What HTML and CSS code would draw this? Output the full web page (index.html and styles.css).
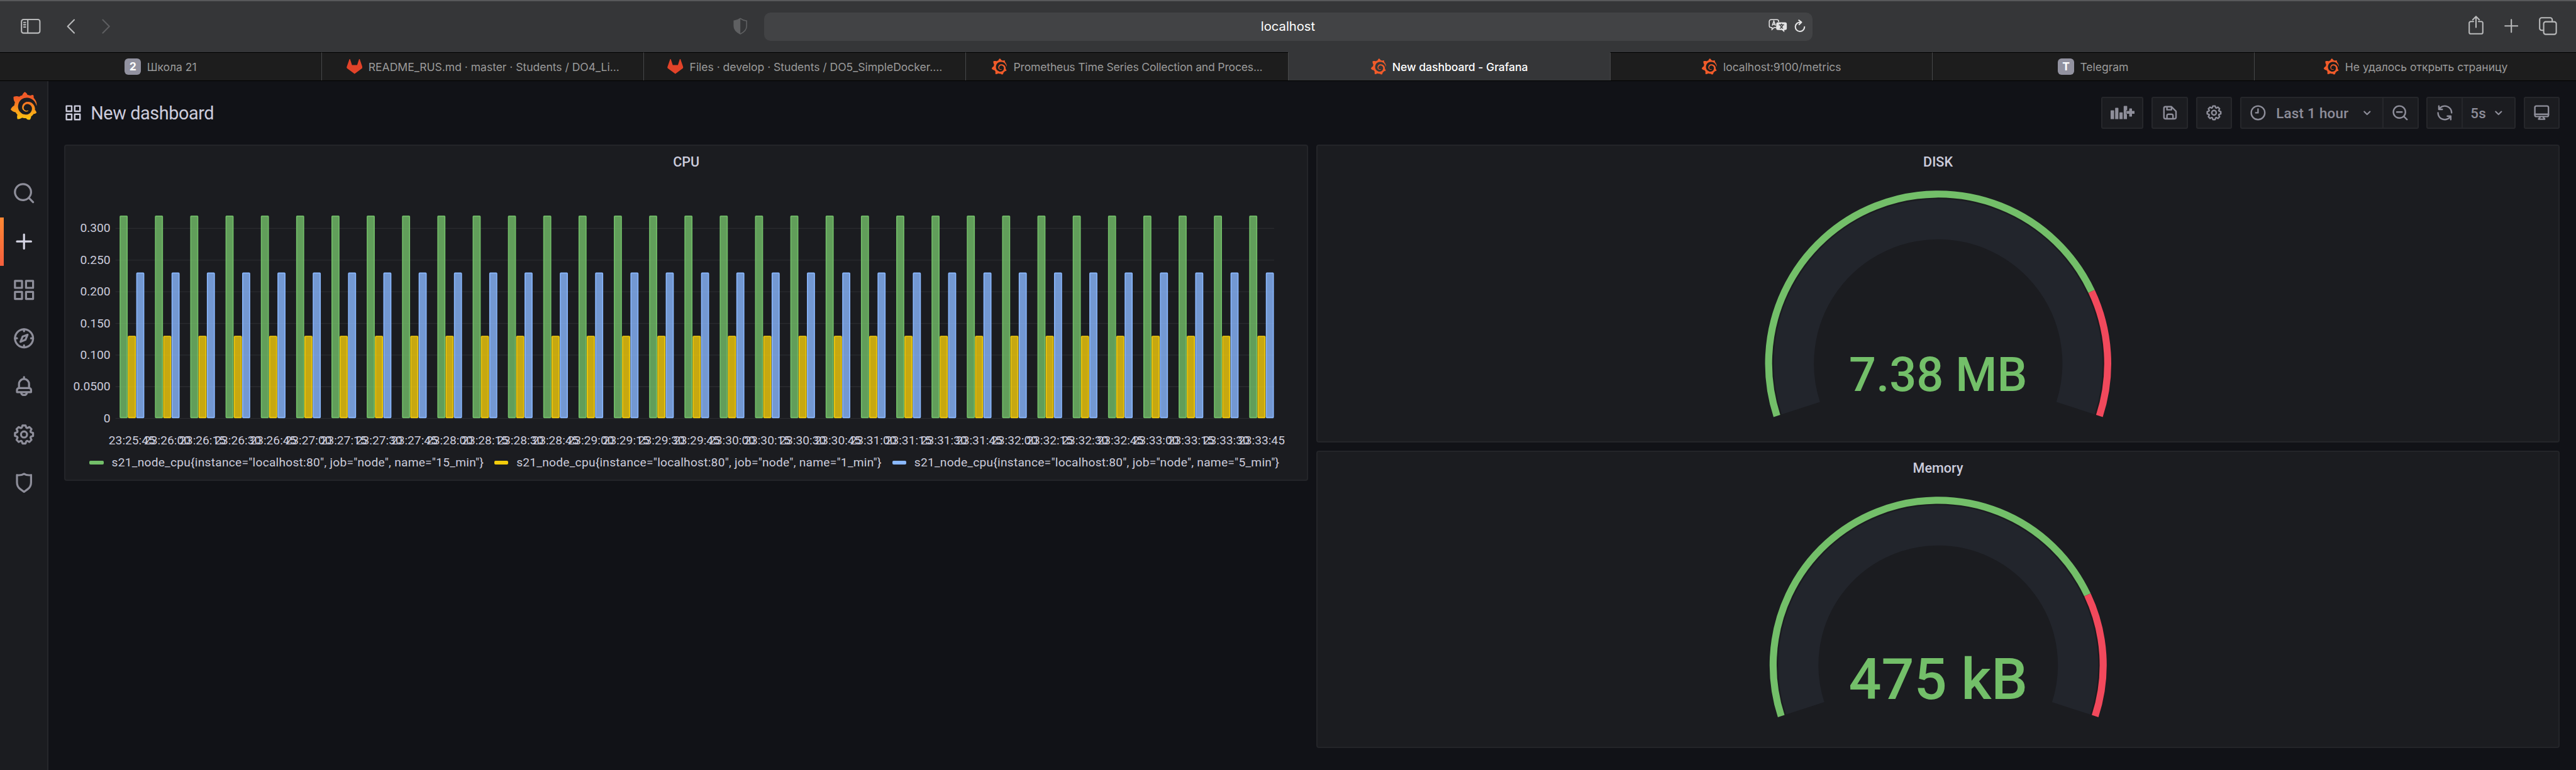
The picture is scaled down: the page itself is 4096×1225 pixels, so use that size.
FILE: index.html
```html
<!DOCTYPE html>
<html lang="ru">
<head>
<meta charset="utf-8">
<title>New dashboard - Grafana</title>
<link rel="stylesheet" href="styles.css">
</head>
<body>
<svg class="sprite" width="0" height="0">
  <defs>
    <linearGradient id="flame" x1="0" y1="1" x2="0" y2="0">
      <stop offset="0" stop-color="#fcc80f"/><stop offset=".35" stop-color="#f99b1c"/><stop offset=".8" stop-color="#f05a28"/>
    </linearGradient>
    <symbol id="grafana" viewBox="8 0 335 358">
      <path d="M342,161.2c-0.6-6.1-1.6-13.1-3.6-20.9c-2-7.7-5-16.2-9.4-25c-4.4-8.8-10.1-17.9-17.5-26.8c-2.9-3.5-6.1-6.9-9.5-10.2c5.1-20.3-6.2-37.9-6.2-37.9c-19.5-1.2-31.9,6.1-36.5,9.4c-0.8-0.3-1.5-0.7-2.3-1c-3.3-1.3-6.7-2.6-10.3-3.7c-3.5-1.1-7.1-2.1-10.8-3c-3.7-0.9-7.4-1.6-11.2-2.2c-0.7-0.1-1.3-0.2-2-0.3c-8.5-27.2-32.9-38.6-32.9-38.6c-27.3,17.3-32.4,41.5-32.4,41.5s-0.1,0.5-0.3,1.4c-1.5,0.4-3,0.9-4.5,1.3c-2.1,0.6-4.2,1.4-6.2,2.2c-2.1,0.8-4.1,1.6-6.2,2.5c-4.1,1.8-8.2,3.8-12.2,6c-3.9,2.2-7.7,4.6-11.4,7.1c-0.5-0.2-1-0.4-1-0.4c-37.8-14.4-71.3,2.9-71.3,2.9c-3.1,40.2,15.1,65.5,18.7,70.1c-0.9,2.5-1.7,5-2.5,7.5c-2.8,9.1-4.9,18.4-6.2,28.1c-0.2,1.4-0.4,2.8-0.5,4.2C18.8,192.7,8.5,228,8.5,228c29.1,33.5,63.1,35.6,63.1,35.6c0,0,0.1-0.1,0.1-0.1c4.3,7.7,9.3,15,14.9,21.9c2.4,2.9,4.8,5.6,7.4,8.3c-10.6,30.4,1.5,55.6,1.5,55.6c32.4,1.2,53.7-14.2,58.2-17.7c3.2,1.1,6.5,2.1,9.8,2.9c10,2.6,20.2,4.1,30.4,4.5c2.5,0.1,5.1,0.2,7.6,0.1l1.2,0l0.8,0l1.6,0l1.6-0.1l0,0.1c15.3,21.8,42.1,24.9,42.1,24.9c19.1-20.1,20.2-40.1,20.2-44.4l0,0c0,0,0-0.1,0-0.3c0-0.4,0-0.6,0-0.6l0,0c0-0.3,0-0.6,0-0.9c4-2.8,7.8-5.8,11.4-9.1c7.6-6.9,14.3-14.8,19.9-23.3c0.5-0.8,1-1.6,1.5-2.4c21.6,1.2,36.9-13.4,36.9-13.4c-3.6-22.5-16.4-33.5-19.1-35.6l0,0c0,0-0.1-0.1-0.3-0.2c-0.2-0.1-0.2-0.2-0.2-0.2c0,0,0,0,0,0c-0.1-0.1-0.3-0.2-0.5-0.3c0.1-1.4,0.2-2.7,0.3-4.1c0.2-2.4,0.2-4.9,0.2-7.3l0-1.8l0-0.9l0-0.5c0-0.6,0-0.4,0-0.6l-0.1-1.5l-0.1-2c0-0.7-0.1-1.3-0.2-1.9c-0.1-0.6-0.1-1.3-0.2-1.9l-0.2-1.9l-0.3-1.9c-0.4-2.5-0.8-4.9-1.4-7.4c-2.3-9.7-6.1-18.9-11-27.2c-5-8.3-11.2-15.6-18.3-21.8c-7-6.2-14.9-11.2-23.1-14.9c-8.3-3.7-16.9-6.1-25.5-7.2c-4.3-0.6-8.6-0.8-12.9-0.7l-1.6,0l-0.4,0c-0.1,0-0.6,0-0.5,0l-0.7,0l-1.6,0.1c-0.6,0-1.2,0.1-1.7,0.1c-2.2,0.2-4.4,0.5-6.5,0.9c-8.6,1.6-16.7,4.7-23.8,9c-7.1,4.3-13.3,9.6-18.3,15.6c-5,6-8.9,12.7-11.6,19.6c-2.7,6.9-4.2,14.1-4.6,21c-0.1,1.7-0.1,3.5-0.1,5.2c0,0.4,0,0.9,0,1.3l0.1,1.4c0.1,0.8,0.1,1.7,0.2,2.5c0.3,3.5,1,6.9,1.9,10.1c1.9,6.5,4.9,12.4,8.6,17.4c3.7,5,8.2,9.1,12.9,12.4c4.7,3.2,9.8,5.5,14.8,7c5,1.5,10,2.1,14.7,2.1c0.6,0,1.2,0,1.7,0c0.3,0,0.6,0,0.9,0c0.3,0,0.6,0,0.9-0.1c0.5,0,1-0.1,1.5-0.1c0.1,0,0.3,0,0.4-0.1l0.5-0.1c0.3,0,0.6-0.1,0.9-0.1c0.6-0.1,1.1-0.2,1.7-0.3c0.6-0.1,1.1-0.2,1.6-0.4c1.1-0.2,2.1-0.6,3.1-0.9c2-0.7,4-1.5,5.7-2.4c1.8-0.9,3.4-2,5-3c0.4-0.3,0.9-0.6,1.3-1c1.6-1.3,1.9-3.7,0.6-5.3c-1.1-1.4-3.1-1.8-4.7-0.9c-0.4,0.2-0.8,0.4-1.2,0.6c-1.4,0.7-2.8,1.3-4.3,1.8c-1.5,0.5-3.1,0.9-4.7,1.2c-0.8,0.1-1.6,0.2-2.5,0.3c-0.4,0-0.8,0.1-1.3,0.1c-0.4,0-0.9,0-1.2,0c-0.4,0-0.8,0-1.2,0c-0.5,0-1,0-1.5-0.1l-0.3,0l-0.3,0c-0.2,0-0.5,0-0.7-0.1c-0.5-0.1-0.9-0.1-1.4-0.2c-3.7-0.5-7.4-1.6-10.9-3.2c-3.6-1.6-7-3.8-10.1-6.6c-3.1-2.8-5.8-6.1-7.9-9.9c-2.1-3.8-3.6-8-4.3-12.4c-0.3-2.2-0.5-4.5-0.4-6.7c0-0.6,0.1-1.2,0.1-1.8l0-0.3l0-0.5c0-0.3,0.1-0.6,0.1-0.9c0.1-1.2,0.3-2.4,0.5-3.6c1.7-9.6,6.5-19,13.9-26.1c1.9-1.8,3.9-3.4,6-4.9c2.1-1.5,4.4-2.8,6.8-3.9c2.4-1.1,4.8-2,7.4-2.7c2.5-0.7,5.1-1.1,7.8-1.4c1.3-0.1,2.6-0.2,4-0.2c0.4,0,0.6,0,0.9,0l1.1,0l0.7,0l0.4,0l1.1,0.1c2.9,0.2,5.7,0.6,8.5,1.3c5.6,1.2,11.1,3.3,16.2,6.1c10.2,5.7,18.9,14.5,24.2,25.1c2.7,5.3,4.6,11,5.5,16.9c0.2,1.5,0.4,3,0.5,4.5l0.1,1.1l0.1,1.1c0,0.4,0,0.8,0,1.1c0,0.4,0,0.8,0,1.1l0,1l0,1.1c0,0.7-0.1,1.9-0.1,2.6c-0.1,1.6-0.3,3.3-0.5,4.9c-0.2,1.6-0.5,3.2-0.8,4.8c-0.3,1.6-0.7,3.2-1.1,4.7c-0.8,3.1-1.8,6.2-3,9.3c-2.4,6-5.6,11.8-9.4,17.1c-7.7,10.6-18.2,19.2-30.2,24.7c-6,2.7-12.3,4.7-18.8,5.7c-3.2,0.6-6.5,0.9-9.8,1l-0.6,0l-0.5,0l-1.1,0l-1.6,0l-1.2,0c-1.8,0-3.5-0.1-5.3-0.3c-7-0.5-13.9-1.8-20.7-3.7c-6.7-1.9-13.2-4.6-19.4-7.8c-12.3-6.6-23.4-15.6-32-26.5c-4.3-5.4-8.1-11.3-11.2-17.4c-3.1-6.1-5.6-12.6-7.4-19.1c-1.8-6.6-2.9-13.3-3.4-20.1l-0.1-1.3l0-0.3l0-0.3l0-0.6l0-1.1l0-0.3l0-0.4l0-0.8l0-1.6l0-1c0-0.8,0-1.7,0-2.5c0.1-3.3,0.4-6.8,0.8-10.2c0.4-3.4,1-6.9,1.7-10.3c0.7-3.4,1.5-6.8,2.5-10.2c1.9-6.7,4.3-13.2,7.1-19.3c5.7-12.2,13.1-23.1,22-31.8c2.2-2.2,4.5-4.2,6.9-6.2c2.4-1.9,4.9-3.7,7.5-5.4c2.5-1.7,5.2-3.2,7.9-4.6c1.3-0.7,2.7-1.4,4.1-2c0.7-0.3,1.4-0.6,2.1-0.9c0.7-0.3,1.4-0.6,2.1-0.9c2.8-1.2,5.7-2.2,8.7-3.1c0.7-0.2,1.5-0.4,2.2-0.7c0.7-0.2,1.5-0.4,2.2-0.6c1.5-0.4,3-0.8,4.5-1.1c0.7-0.2,1.5-0.3,2.3-0.5c0.8-0.2,1.5-0.3,2.3-0.5c0.8-0.1,1.5-0.3,2.3-0.4l1.1-0.2l1.2-0.2c0.8-0.1,1.5-0.2,2.3-0.3c0.9-0.1,1.7-0.2,2.6-0.3c0.7-0.1,1.9-0.2,2.6-0.3c0.5-0.1,1.1-0.1,1.6-0.2l1.1-0.1l0.5-0.1l0.6,0c0.9-0.1,1.7-0.1,2.6-0.2l1.3-0.1l0.4,0l0.6,0c0.7,0,1.5-0.1,2.2-0.1c2.9-0.1,5.9-0.1,8.8,0c5.8,0.2,11.5,0.9,17,1.9c11.1,2.1,21.5,5.6,31,10.3c9.5,4.6,17.9,10.3,25.3,16.5c0.5,0.4,0.9,0.8,1.4,1.2c0.4,0.4,0.9,0.8,1.3,1.2c0.9,0.8,1.7,1.6,2.6,2.4c0.9,0.8,1.7,1.6,2.5,2.4c0.8,0.8,1.6,1.6,2.4,2.5c3.1,3.3,6,6.6,8.6,10c5.2,6.7,9.4,13.5,12.7,19.9c0.2,0.4,0.4,0.8,0.6,1.2c0.2,0.4,0.4,0.8,0.6,1.2c0.4,0.8,0.8,1.6,1.1,2.4c0.4,0.8,0.7,1.5,1.1,2.3c0.3,0.8,0.7,1.5,1,2.3c1.2,3,2.4,5.9,3.3,8.6c1.5,4.4,2.6,8.3,3.5,11.7c0.3,1.4,1.6,2.3,3,2.1c1.5-0.1,2.6-1.3,2.6-2.8C342.6,170.4,342.5,166.1,342,161.2z"/>
    </symbol>
    <symbol id="fox" viewBox="0 0 32 32">
      <path d="M5.6 1.8c.3-.8 1.3-.8 1.6 0L10.9 13h10.2L24.8 1.8c.3-.8 1.3-.8 1.6 0L31.6 17c.3 1 0 2-.8 2.6L16 30.5 1.2 19.600C.4 19 .1 18 .4 17Z"/>
    </symbol>
    <symbol id="apps" viewBox="0 0 24 24"><path d="M10,13H3a1,1,0,0,0-1,1v7a1,1,0,0,0,1,1h7a1,1,0,0,0,1-1V14A1,1,0,0,0,10,13ZM9,20H4V15H9ZM21,2H14a1,1,0,0,0-1,1v7a1,1,0,0,0,1,1h7a1,1,0,0,0,1-1V3A1,1,0,0,0,21,2ZM20,9H15V4h5Zm1,4H14a1,1,0,0,0-1,1v7a1,1,0,0,0,1,1h7a1,1,0,0,0,1-1V14A1,1,0,0,0,21,13Zm-1,7H15V15h5ZM10,2H3A1,1,0,0,0,2,3v7a1,1,0,0,0,1,1h7a1,1,0,0,0,1-1V3A1,1,0,0,0,10,2ZM9,9H4V4H9Z"/></symbol>
    <symbol id="cog" viewBox="0 0 24 24"><path d="M21.32,9.55l-1.89-.63.89-1.78A1,1,0,0,0,20.13,6L18,3.87a1,1,0,0,0-1.15-.19l-1.78.89-.63-1.89A1,1,0,0,0,13.5,2h-3a1,1,0,0,0-.95.68L8.92,4.57,7.14,3.68A1,1,0,0,0,6,3.87L3.87,6a1,1,0,0,0-.19,1.15l.89,1.78-1.89.63A1,1,0,0,0,2,10.5v3a1,1,0,0,0,.68.95l1.89.63-.89,1.78A1,1,0,0,0,3.87,18L6,20.13a1,1,0,0,0,1.15.19l1.78-.89.63,1.89a1,1,0,0,0,.95.68h3a1,1,0,0,0,.95-.68l.63-1.89,1.78.89A1,1,0,0,0,18,20.13L20.13,18a1,1,0,0,0,.19-1.15l-.89-1.78,1.89-.63A1,1,0,0,0,22,13.5v-3A1,1,0,0,0,21.32,9.55ZM20,12.78l-1.2.4A2,2,0,0,0,17.64,16l.57,1.14-1.1,1.1L16,17.64a2,2,0,0,0-2.79,1.16l-.4,1.2H11.22l-.4-1.2A2,2,0,0,0,8,17.64l-1.14.57-1.1-1.1L6.36,16A2,2,0,0,0,5.2,13.18L4,12.78V11.22l1.2-.4A2,2,0,0,0,6.36,8L5.79,6.89l1.1-1.1L8,6.36A2,2,0,0,0,10.82,5.2l.4-1.2h1.56l.4,1.2A2,2,0,0,0,16,6.36l1.14-.57,1.1,1.1L17.64,8a2,2,0,0,0,1.16,2.79l1.2.4ZM12,8a4,4,0,1,0,4,4A4,4,0,0,0,12,8Zm0,6a2,2,0,1,1,2-2A2,2,0,0,1,12,14Z"/></symbol>
    <symbol id="angle" viewBox="0 0 24 24"><path d="M17,9.17a1,1,0,0,0-1.41,0L12,12.71,8.46,9.17a1,1,0,0,0-1.41,0,1,1,0,0,0,0,1.42l4.24,4.24a1,1,0,0,0,1.42,0L17,10.59A1,1,0,0,0,17,9.17Z"/></symbol>
  </defs>
</svg>

<header class="browser">
  <div class="toolbar">
    <div class="tools tools-left">
      <svg class="t-sidebar line" viewBox="0 0 40 32"><rect x="1.5" y="2.5" width="36.5" height="27" rx="4"/><path d="M14 3v26M6 8.5h3.5M6 13h3.5M6 17.5h3.5"/></svg>
      <svg class="t-back line" viewBox="0 0 18 30"><path d="M15 2 2 15l13 13"/></svg>
      <svg class="t-forward line" viewBox="0 0 18 30"><path d="M3 2l13 13L3 28"/></svg>
      <svg class="t-shield" viewBox="0 0 28 34"><path class="edge" d="M14 1.8C10 5 6 6 1.5 6.5V17c0 7 5 12 12.500 15.500C21.500 29 26.500 24 26.500 17V6.500C22 6 18 5 14 1.800Z"/><path d="M14 1.800C10 5 6 6 1.500 6.500V17c0 7 5 12 12.500 15.500Z"/></svg>
    </div>
    <div class="address">
      <span class="host">localhost</span>
      <svg class="t-translate" viewBox="0 0 38 28"><path class="edge" d="M16 17.500h-4.500L7 21.500v-4H5a3.500 3.500 0 0 1-3.500-3.500V5A3.500 3.500 0 0 1 5 1.500h12A3.500 3.500 0 0 1 20.500 5v1.500M7.500 13.500l3.300-9 3.300 9M8.600 11h4.500"/><path d="M19 7h14.500A3.500 3.500 0 0 1 37 10.500V19a3.500 3.500 0 0 1-3.500 3.500H32V27l-5-4.500h-8a3.500 3.500 0 0 1-3.500-3.500v-8.500A3.500 3.500 0 0 1 19 7Z"/><path class="cut" d="M21 12h10.500M26.200 9.500V12M23 19.500c3-1.500 5-4 5.800-7M23.500 12.500c1 3 3 5.500 6 7"/></svg>
      <svg class="t-reload line" viewBox="0 0 22 26"><path d="M12 5.600A9 9 0 1 0 20 14.500M9 1.500l5 4-4.500 4.500"/></svg>
    </div>
    <div class="tools tools-right">
      <svg class="t-share line" viewBox="0 0 30 38"><path d="M10 11.500H4.500A3 3 0 0 0 1.500 14.500V33a3 3 0 0 0 3 3h21a3 3 0 0 0 3-3V14.500a3 3 0 0 0-3-3H20M15 23V2M8.500 8 15 1.500 21.500 8"/></svg>
      <svg class="t-plus line" viewBox="0 0 28 28"><path d="M14 1.500v25M1.500 14h25"/></svg>
      <svg class="t-tabs line" viewBox="0 0 36 36"><rect x="9.500" y="9.500" width="25" height="25" rx="4"/><path d="M9 26.500H5.500a4 4 0 0 1-4-4v-17a4 4 0 0 1 4-4h17a4 4 0 0 1 4 4V9"/></svg>
    </div>
  </div>
  <nav class="tabs">
    <div class="tab"><span class="letter">2</span><span>Школа 21</span></div>
    <div class="tab"><svg class="fav fav-fox"><use href="#fox"/></svg><span>README_RUS.md · master · Students / DO4_Li...</span></div>
    <div class="tab"><svg class="fav fav-fox"><use href="#fox"/></svg><span>Files · develop · Students / DO5_SimpleDocker....</span></div>
    <div class="tab tight"><svg class="fav"><use href="#grafana"/></svg><span>Prometheus Time Series Collection and Proces...</span></div>
    <div class="tab active"><svg class="fav"><use href="#grafana"/></svg><span>New dashboard - Grafana</span></div>
    <div class="tab"><svg class="fav"><use href="#grafana"/></svg><span>localhost:9100/metrics</span></div>
    <div class="tab"><span class="letter">T</span><span>Telegram</span></div>
    <div class="tab"><svg class="fav"><use href="#grafana"/></svg><span>Не удалось открыть страницу</span></div>
  </nav>
</header>

<div class="app">
  <aside class="side">
    <div class="logo"><svg><use href="#grafana"/></svg></div>
    <div class="item"><svg viewBox="0 0 24 24"><path d="M21.71,20.29,18,16.61A9,9,0,1,0,16.61,18l3.68,3.68a1,1,0,0,0,1.42,0A1,1,0,0,0,21.71,20.29ZM11,18a7,7,0,1,1,7-7A7,7,0,0,1,11,18Z"/></svg></div>
    <div class="item current"><svg viewBox="0 0 24 24"><path d="M19,11H13V5a1,1,0,0,0-2,0v6H5a1,1,0,0,0,0,2h6v6a1,1,0,0,0,2,0V13h6a1,1,0,0,0,0-2Z"/></svg></div>
    <div class="item"><svg><use href="#apps"/></svg></div>
    <div class="item"><svg class="stroke" viewBox="0 0 24 24"><circle cx="12" cy="12" r="9"/><path d="M12 3v2M12 19v2M3 12h2M19 12h2M15.500 8.500 10.600 10.300 8.500 15.500 13.400 13.500Z"/></svg></div>
    <div class="item"><svg viewBox="0 0 24 24"><path d="M18,13.18V10a6,6,0,0,0-5-5.91V3a1,1,0,0,0-2,0V4.09A6,6,0,0,0,6,10v3.180A3,3,0,0,0,4,16v2a1,1,0,0,0,1,1H8.140a4,4,0,0,0,7.720,0H19a1,1,0,0,0,1-1V16A3,3,0,0,0,18,13.180ZM8,10a4,4,0,0,1,8,0v3H8Zm4,10a2,2,0,0,1-1.720-1h3.440A2,2,0,0,1,12,20Zm6-3H6V16a1,1,0,0,1,1-1H17a1,1,0,0,1,1,1Z"/></svg></div>
    <div class="item"><svg><use href="#cog"/></svg></div>
    <div class="item"><svg class="stroke" viewBox="0 0 24 24"><path d="M5 4.200Q9 4.900 12 3 15 4.900 19 4.200V11.500Q19 15.800 15.700 18.200L12 20.900 8.300 18.200Q5 15.800 5 11.500Z"/></svg></div>
  </aside>

  <main class="main">
    <div class="head">
      <svg class="head-icon"><use href="#apps"/></svg>
      <h1>New dashboard</h1>
      <div class="actions">
        <button class="btn add"><svg viewBox="0 0 48 28"><path d="M0 10.500a1 1 0 0 1 1-1h5a1 1 0 0 1 1 1V27H0ZM9 5.500a1 1 0 0 1 1-1h4.500a1 1 0 0 1 1 1V27H9ZM17.500 14.500a1 1 0 0 1 1-1h4.500a1 1 0 0 1 1 1V27h-6.500ZM26 1.500a1 1 0 0 1 1-1h5a1 1 0 0 1 1 1V9h-1.500v2H31v6h1.500V27H26ZM37 6.500a1 1 0 0 1 1-1h3.500a1 1 0 0 1 1 1v4.200H47a1 1 0 0 1 1 1v3.600a1 1 0 0 1-1 1h-4.500v4.500a1 1 0 0 1-1 1H38a1 1 0 0 1-1-1v-4.500h-4.500a1 1 0 0 1-1-1v-3.600a1 1 0 0 1 1-1H37Z"/></svg></button>
        <button class="btn"><svg class="ico" viewBox="0 0 24 24"><path d="M20.710,9.290l-6-6a1,1,0,0,0-.320-.210A1.090,1.090,0,0,0,14,3H6A3,3,0,0,0,3,6V18a3,3,0,0,0,3,3H18a3,3,0,0,0,3-3V10A1,1,0,0,0,20.710,9.290ZM9,5h4V7H9Zm6,14H9V16a1,1,0,0,1,1-1h4a1,1,0,0,1,1,1Zm4-1a1,1,0,0,1-1,1H17V16a3,3,0,0,0-3-3H10a3,3,0,0,0-3,3v3H6a1,1,0,0,1-1-1V6A1,1,0,0,1,6,5H7V8A1,1,0,0,0,8,9h6a1,1,0,0,0,1-1V6.410l4,4Z"/></svg></button>
        <button class="btn"><svg class="ico"><use href="#cog"/></svg></button>
        <div class="group">
          <button class="btn range"><svg class="ico stroke" viewBox="0 0 24 24"><circle cx="12" cy="12" r="9"/><path d="M12 7v5H9"/></svg><span>Last 1 hour</span><svg class="chev"><use href="#angle"/></svg></button>
          <button class="btn zoom"><svg class="ico stroke" viewBox="0 0 24 24"><circle cx="11" cy="11" r="8"/><path d="M7.500 11h7M17 17l4 4"/></svg></button>
        </div>
        <div class="group">
          <button class="btn sync"><svg class="ico" viewBox="0 0 24 24"><path d="M19.910,15.510H15.380a1,1,0,0,0,0,2h2.400A8,8,0,0,1,4,12a1,1,0,0,0-2,0,10,10,0,0,0,16.880,7.230V21a1,1,0,0,0,2,0V16.500A1,1,0,0,0,19.910,15.510ZM12,2A10,10,0,0,0,5.120,4.770V3a1,1,0,0,0-2,0V7.500a1,1,0,0,0,1,1h4.500a1,1,0,0,0,0-2H6.220A8,8,0,0,1,20,12a1,1,0,0,0,2,0A10,10,0,0,0,12,2Z"/></svg></button>
          <button class="btn every"><span>5s</span><svg class="chev"><use href="#angle"/></svg></button>
        </div>
        <button class="btn"><svg class="ico stroke" viewBox="0 0 24 24"><rect x="3" y="3" width="18" height="14" rx="2"/><path d="M3 14h18M10 17.500c0 1.500-2 1.500-2 3h8c0-1.500-2-1.500-2-3"/></svg></button>
      </div>
    </div>

    <div class="grid">
      <section class="panel cpu">
        <h2>CPU</h2>
        <svg class="plot" id="plot" viewBox="130.5 353 2467 550"></svg>
        <ul class="legend">
          <li><i class="green"></i>s21_node_cpu{instance="localhost:80", job="node", name="15_min"}</li>
          <li><i class="yellow"></i>s21_node_cpu{instance="localhost:80", job="node", name="1_min"}</li>
          <li><i class="blue"></i>s21_node_cpu{instance="localhost:80", job="node", name="5_min"}</li>
        </ul>
      </section>
      <div class="column">
        <section class="panel">
          <h2>DISK</h2>
          <svg class="gauge" data-r="344" data-cy="370.5" data-font="94.8" data-base="425" data-value="7.38 MB" viewBox="-1233.5 0 2467 522"></svg>
        </section>
        <section class="panel">
          <h2>Memory</h2>
          <svg class="gauge" data-r="335" data-cy="361.5" data-font="114.5" data-base="428.5" data-value="475 kB" viewBox="-1233.5 0 2467 522"></svg>
        </section>
      </div>
    </div>
  </main>
</div>
<script src="charts.js"></script>
</body>
</html>
```
FILE: styles.css
```css
* { box-sizing: border-box; }

html, body { margin: 0; height: 100%; }

body {
  display: flex;
  flex-direction: column;
  overflow: hidden;
  background: #111217;
  color: #ccccdc;
  font-family: Roboto, "Liberation Sans", sans-serif;
}

.sprite { position: absolute; }

svg { display: block; flex: none; fill: currentColor; }

/* browser window */
.browser {
  flex: none;
  height: 129px;
  border-bottom: 1px solid #000;
  background: #353638;
  font-family: Inter, "Liberation Sans", sans-serif;
}

.toolbar {
  display: grid;
  grid-template-columns: 1fr 1667px 1fr;
  align-items: center;
  height: 83px;
  border-top: 2px solid #58595b;
}

.tools { display: flex; align-items: center; color: #b9babb; }
.tools-left { padding: 0 26px 2px 33px; }
.tools-right { justify-content: flex-end; padding: 0 30px 2px 0; }

.line {
  fill: none;
  stroke: currentColor;
  stroke-width: 2.6;
  stroke-linecap: round;
  stroke-linejoin: round;
}

.t-sidebar { width: 32px; height: 25.6px; }
.t-back { width: 14.4px; height: 24px; margin-left: 41px; }
.t-forward { width: 14.4px; height: 24px; margin-left: 41px; color: #5d5e60; }
.t-shield { width: 22.4px; height: 27.2px; margin-left: auto; color: #5f6062; }
.edge { fill: none; stroke: currentColor; stroke-width: 2; }
.t-share { width: 24px; height: 30.4px; margin-bottom: 2px; }
.t-plus { width: 22.4px; height: 22.4px; margin-left: 33px; }
.t-tabs { width: 28.8px; height: 28.8px; margin-left: 33px; }

.address {
  display: grid;
  grid-template-columns: 1fr auto 1fr;
  align-items: center;
  height: 45px;
  border-radius: 10px;
  background: #424345;
  color: #e3e3e4;
}
.host {
  grid-column: 2;
  margin-top: -3px;
  color: #fff;
  font-size: 20.2px;
}
.t-translate { grid-column: 3; grid-row: 1; width: 30px; height: 22px; justify-self: end; margin: -4px 40px 0 0; }
.t-reload { grid-column: 3; grid-row: 1; width: 18px; height: 21px; justify-self: end; margin: -2px 11px 0 0; }
.cut { fill: none; stroke: #424345; stroke-width: 1.8; }

.tabs { display: flex; height: 45px; }
.tab {
  flex: 1 1 0;
  display: flex;
  align-items: center;
  justify-content: center;
  gap: 9.6px;
  border-top: 1px solid #000;
  border-left: 1px solid #474849;
  background: #1d1d1d;
  color: #9a9a9a;
  font-size: 17.6px;
  letter-spacing: -.05px;
  white-space: nowrap;
}
.tab:first-child { border-left: 0; }
.tab.tight { letter-spacing: -.2px; }
.tab.active { border-top-color: #353638; background: #353638; color: #fff; font-weight: 500; }
.letter {
  width: 25.6px;
  height: 25.6px;
  border-radius: 6px;
  background: #9292a0;
  color: #fff;
  font-weight: 700;
  line-height: 26px;
  text-align: center;
}
.fav { width: 25.6px; height: 25.6px; color: #f15b2a; }
.fav-fox { color: #e24329; }

/* dashboard */
.app { flex: 1; display: flex; min-height: 0; }

.side {
  flex: none;
  width: 76.8px;
  border-right: 2px solid #26272b;
  background: #1b1c20;
  color: #8e8e9a;
}
.logo { height: 140px; padding: 17px 0 0 17px; }
.logo svg { width: 41.6px; height: 44.5px; fill: url(#flame); }
.item {
  display: flex;
  align-items: center;
  justify-content: center;
  height: 76.8px;
  padding-left: 1.6px;
}
.item svg { width: 38.4px; height: 38.4px; }
.item.current {
  color: #d5d5e4;
  background: linear-gradient(#ff8833, #f55f3e) left / 6.4px 100% no-repeat;
}
.stroke {
  fill: none;
  stroke: currentColor;
  stroke-width: 2;
  stroke-linecap: round;
  stroke-linejoin: round;
}

.main { flex: 1; padding: 0 25.6px; min-width: 0; }

.head { display: flex; align-items: center; height: 101.4px; }
.head-icon { width: 28.8px; height: 28.8px; color: #ccccdc; }
h1 { margin: 0 0 0 13px; font-size: 28.8px; font-weight: 400; letter-spacing: -.4px; }

.actions { display: flex; gap: 12.8px; margin-left: auto; }
.group { display: flex; }
.btn {
  display: flex;
  align-items: center;
  justify-content: center;
  width: 57.6px;
  height: 51.2px;
  padding: 0;
  border: 2px solid #26272b;
  border-radius: 3px;
  background: #1b1c20;
  color: #8e8e9a;
  font: 500 22.4px Roboto, sans-serif;
  letter-spacing: .24px;
}
.add { width: 67.2px; }
.add svg { width: 38.4px; height: 22.4px; }
.ico { width: 28.8px; height: 28.8px; }
.chev { width: 25.6px; height: 25.6px; }
.group .btn:first-child { border-radius: 3px 0 0 3px; }
.group .btn:last-child { border-left: 0; border-radius: 0 3px 3px 0; }
.range { width: 228px; justify-content: flex-start; padding-left: 12px; }
.range span { margin: 0 17px 0 14.4px; }
.zoom { width: 55.6px; }
.every { width: 84px; gap: 7px; }

.grid { display: flex; gap: 12.8px; }
.panel {
  display: flex;
  flex-direction: column;
  width: 1977.6px;
  height: 473.6px;
  border: 2px solid #242529;
  border-radius: 4px;
  background: #1b1c20;
}
.cpu { height: 534.4px; }
.column { display: flex; flex-direction: column; gap: 12.8px; }
h2 {
  flex: none;
  height: 50px;
  margin: 0;
  font-size: 21.6px;
  font-weight: 500;
  line-height: 52px;
  text-align: center;
}

.plot { width: 1973.6px; height: 440px; }
.legend {
  display: flex;
  gap: 16.9px;
  margin: 0;
  padding: 0 0 0 38px;
  list-style: none;
  font-size: 19.2px;
  letter-spacing: .235px;
  line-height: 27px;
  white-space: nowrap;
}
.legend li { display: flex; align-items: center; gap: 12.8px; }
.legend i { width: 22.4px; height: 6.4px; border-radius: 2px; }
.green { background: #73bf69; }
.yellow { background: #f2cc0c; }
.blue { background: #8ab8ff; }

.gauge { width: 1973.6px; height: 417.6px; }
.plot text { fill: #ccccdc; font-size: 24px; }
.gridline { stroke: #2a2b2f; stroke-width: 1.6; }
.gauge text { fill: #73bf69; font-weight: 500; text-anchor: middle; }
.ring { fill: none; stroke: #22252c; }
.ok { fill: none; stroke: #73bf69; }
.bad { fill: none; stroke: #f2495c; }
```
FILE: charts.js
```javascript
const NS = 'http://www.w3.org/2000/svg';

function add(parent, name, attrs, text) {
  const el = document.createElementNS(NS, name);
  for (const key in attrs) el.setAttribute(key, attrs[key]);
  if (text) el.textContent = text;
  parent.appendChild(el);
}

// CPU bars
const plot = document.getElementById('plot');
const zero = 832, perUnit = 1259;
['0', '0.0500', '0.100', '0.150', '0.200', '0.250', '0.300'].forEach((label, i) => {
  const y = zero + .5 - i * 0.05 * perUnit;
  add(plot, 'line', { class: 'gridline', x1: 230, x2: 2533, y1: y, y2: y });
  add(plot, 'text', { x: 220, y: y + 7.5, 'text-anchor': 'end' }, label);
});
const series = [[0.32, '#73bf69', 0], [0.13, '#f2cc0c', 16.4], [0.23, '#8ab8ff', 33]];
for (let i = 0; i < 33; i++) {
  const left = 238.3 + i * 70.16;
  for (const [value, color, dx] of series) {
    const h = value * perUnit;
    add(plot, 'rect', {
      x: left + dx + 1, y: zero - h + 1, width: 14, height: h - 2, rx: 1,
      fill: color, 'fill-opacity': .8, stroke: color, 'stroke-width': 2
    });
  }
  const t = 25 * 60 + 45 + i * 15;
  const label = '23:' + Math.floor(t / 60) + ':' + String(t % 60).padStart(2, '0');
  add(plot, 'text', { x: left + 24.5, y: 884.5, 'text-anchor': 'middle' }, label);
}

// gauges: 216 degree sweep, threshold at 80%
function arc(cy, r, from, to) {
  const p = a => (r * Math.cos(a * Math.PI / 180)).toFixed(2) + ' ' + (cy + r * Math.sin(a * Math.PI / 180)).toFixed(2);
  return `M${p(from)}A${r} ${r} 0 ${to - from > 180 ? 1 : 0} 1 ${p(to)}`;
}
for (const g of document.querySelectorAll('.gauge')) {
  const d = g.dataset, r = +d.r, cy = +d.cy;
  // both arcs stay below 180 degrees, the background ring does not
  add(g, 'path', { class: 'ring', d: arc(cy, r - 57, -198, 18), 'stroke-width': 80 });
  add(g, 'path', { class: 'ok', d: arc(cy, r - 7, -198, -25.2), 'stroke-width': 14 });
  add(g, 'path', { class: 'bad', d: arc(cy, r - 7, -25.2, 18), 'stroke-width': 14 });
  add(g, 'text', { x: 0, y: d.base, 'font-size': d.font }, d.value);
}
```
